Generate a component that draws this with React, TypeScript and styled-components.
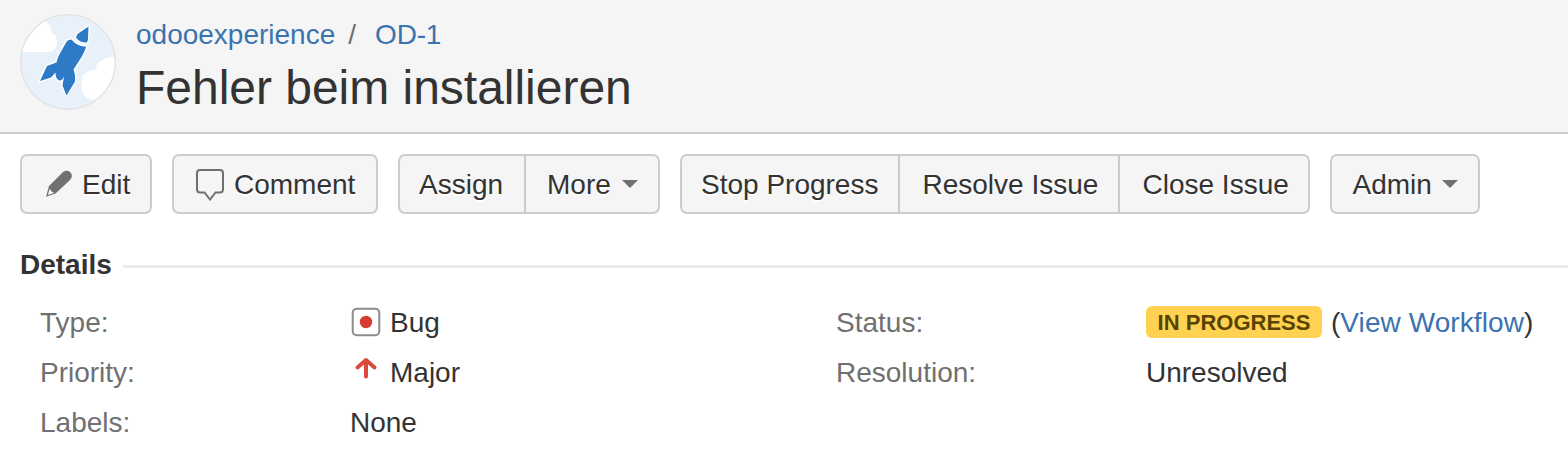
import React from "react";
import styled, { createGlobalStyle } from "styled-components";

const GlobalStyle = createGlobalStyle`
  body { margin: 0; background: #fff; color: #333; font: 28px/40px "Liberation Sans", Arial, sans-serif; }
  * { box-sizing: border-box; }
`;
const Page = styled.main`
  height: 472px;
  overflow: hidden;
`;
const Header = styled.header`
  display: flex;
  gap: 20px;
  height: 134px;
  padding: 14px 20px 0;
  background: #f5f5f5;
  border-bottom: 2px solid #ccc;
`;
const Avatar = styled.svg`
  width: 96px;
  height: 96px;
  flex: none;
`;
const Crumbs = styled.nav`
  display: flex;
  height: 41px;
  padding-top: 1px;
  color: #707070;
`;
const Link = styled.a<{ $track?: number }>`
  color: #3b73af;
  letter-spacing: ${(p) => p.$track ?? 0}px;
  text-decoration: none;
`;
const Slash = styled.span`
  padding: 0 19px 0 13px;
`;
const Title = styled.h1`
  margin: 3px 0 0;
  font-size: 48px;
  font-weight: 400;
  line-height: 60px;
  letter-spacing: -0.02px;
`;
const Toolbar = styled.div`
  display: flex;
  gap: 20px;
  padding: 20px 20px 0;
`;
const Group = styled.div`
  display: flex;
`;
const Button = styled.button<{ $w: number; $pad?: number }>`
  display: flex;
  align-items: center;
  width: ${(p) => p.$w}px;
  height: 60px;
  padding: 2px 0 0 ${(p) => p.$pad ?? 21}px;
  border: 2px solid #ccc;
  background: #f5f5f5;
  color: #333;
  font: inherit;
  text-shadow: 0 2px 0 #fff;
  white-space: nowrap;
  &:first-child { border-radius: 7px 0 0 7px; }
  &:last-child { border-radius: 0 7px 7px 0; }
  &:only-child { border-radius: 7px; }
  & + & { margin-left: -2px; }
`;
const Glyph = styled.svg<{ $gap: number }>`
  flex: none;
  margin: 0 ${(p) => p.$gap}px 2px 0;
`;
const Caret = styled.span<{ $gap?: number }>`
  margin: 0 0 2px ${(p) => p.$gap ?? 11}px;
  border: 8px solid transparent;
  border-top-color: #707070;
  border-bottom: 0;
`;
const SectionTitle = styled.h2`
  display: flex;
  align-items: center;
  gap: 11px;
  margin: 31px 0 0 20px;
  font-size: 28px;
  line-height: 40px;
  &::after {
    content: "";
    flex: 1;
    height: 3px;
    margin-top: 3px;
    background: #ebebeb;
  }
`;
const Columns = styled.div`
  display: grid;
  grid-template-columns: 796px 1fr;
  padding: 18px 0 0 40px;
`;
const Row = styled.div`
  display: grid;
  grid-template-columns: 310px 1fr;
  height: 50px;
`;
const Label = styled.span`
  color: #707070;
`;
const Value = styled.span`
  display: flex;
  white-space: nowrap;
`;
const ValueIcon = styled.svg`
  width: 32px;
  height: 32px;
  margin: 3px 8px 0 0;
`;
const Lozenge = styled.span`
  width: 176px;
  height: 32px;
  margin: 3px 9px 0 0;
  border-radius: 6px;
  background: #ffd351;
  color: #594300;
  font-size: 22px;
  font-weight: 700;
  line-height: 33px;
  text-align: center;
`;

export default function App() {
  return (
    <Page>
      <GlobalStyle />
      <Header>
        <Avatar viewBox="0 0 96 96">
          <defs>
            <clipPath id="disc"><circle cx="48" cy="48" r="47" /></clipPath>
          </defs>
          <g clipPath="url(#disc)">
            <rect width="96" height="96" fill="#e8f0f9" />
            <path d="M0 0H20C26 8 31 11 31 18C38 21 39 31 34 36C32 38 29 38 25 38H0Z" fill="#fff" />
            <path d="M96 43C86 43 77 46 75 56C65 56 60 63 62 69C61 78 64 86 75 86L96 96Z" fill="#fff" />
          </g>
          <circle cx="48" cy="48" r="47.3" fill="none" stroke="#e0e0e0" strokeWidth="1.2" />
          <g fill="#2f7ac6" stroke="#fff" strokeWidth="3" strokeLinejoin="round" paintOrder="stroke">
            <path d="M68.500 12.500L57.500 20Q56.500 21.500 56 23.500C58 26.500 62 28.500 66.500 28.500Q68 27 68 25Z" />
            <path d="M51.500 25.500C55 30 60 32.500 66 32.500C65 39 58 48 53.500 55.500L55 61V67.500L46.500 81.500L42.500 71.500L44 62.500C43 65 41 67 39 66.500C37 65 35.500 63 35.500 58.500L31 63.500L20 67L27 52L36.500 48.500C38 41 44 33 47 27Q49 25.500 51.500 25.500Z" />
          </g>
        </Avatar>
        <div>
          <Crumbs>
            <Link>odooexperience</Link><Slash>/</Slash><Link $track={-0.2}>OD-1</Link>
          </Crumbs>
          <Title>Fehler beim installieren</Title>
        </div>
      </Header>
      <Toolbar>
        <Group>
          <Button $w={132} $pad={23}>
            <Glyph width="28" height="28" viewBox="0 0 28 28" $gap={9}>
              <path d="M17.500 2.500C20 .3 23.500 .3 25.500 2.500C27.500 4.700 27.300 7.500 25 10L10.500 23.500L1 26.800L4 16Z" fill="#707070" />
              <path d="M4.800 18.500L6 21L9 23L3.500 24.800L3 24Z" fill="#f5f5f5" />
            </Glyph>
            Edit
          </Button>
        </Group>
        <Group>
          <Button $w={206} $pad={21}>
            <Glyph width="30" height="34" viewBox="0 0 30 34" $gap={9}>
              <path d="M5 3H25Q28 3 28 6V22Q28 25.500 25 25.500H20.500L15 32.500L9.500 25.500H5Q2 25.500 2 22V6Q2 3 5 3Z" fill="none" stroke="#707070" strokeWidth="2" />
            </Glyph>
            Comment
          </Button>
        </Group>
        <Group>
          <Button $w={128} $pad={19}>Assign</Button>
          <Button $w={136}>More<Caret /></Button>
        </Group>
        <Group>
          <Button $w={220} $pad={19}>Stop Progress</Button>
          <Button $w={222} $pad={22.5}>Resolve Issue</Button>
          <Button $w={192} $pad={22.5}>Close Issue</Button>
        </Group>
        <Group>
          <Button $w={150} $pad={20.5}>Admin<Caret $gap={10} /></Button>
        </Group>
      </Toolbar>
      <SectionTitle>Details</SectionTitle>
      <Columns>
        <div>
          <Row>
            <Label>Type:</Label>
            <Value>
              <ValueIcon viewBox="0 0 32 32">
                <rect x="2.700" y="2.700" width="26.600" height="26.600" rx="4" fill="#fff" stroke="#8c8c8c" strokeWidth="2" />
                <circle cx="16" cy="16" r="6.200" fill="#d43d30" />
              </ValueIcon>
              Bug
            </Value>
          </Row>
          <Row>
            <Label>Priority:</Label>
            <Value>
              <ValueIcon viewBox="0 0 32 32">
                <path d="M16 20.500V4.500M7.500 11.500L16 4L24.500 11.500" fill="none" stroke="#dc483b" strokeWidth="4" strokeLinecap="round" strokeLinejoin="round" />
              </ValueIcon>
              Major
            </Value>
          </Row>
          <Row><Label>Labels:</Label><Value>None</Value></Row>
        </div>
        <div>
          <Row>
            <Label>Status:</Label>
            <Value><Lozenge>IN PROGRESS</Lozenge>(<Link $track={0.08}>View Workflow</Link>)</Value>
          </Row>
          <Row><Label>Resolution:</Label><Value>Unresolved</Value></Row>
        </div>
      </Columns>
    </Page>
  );
}
